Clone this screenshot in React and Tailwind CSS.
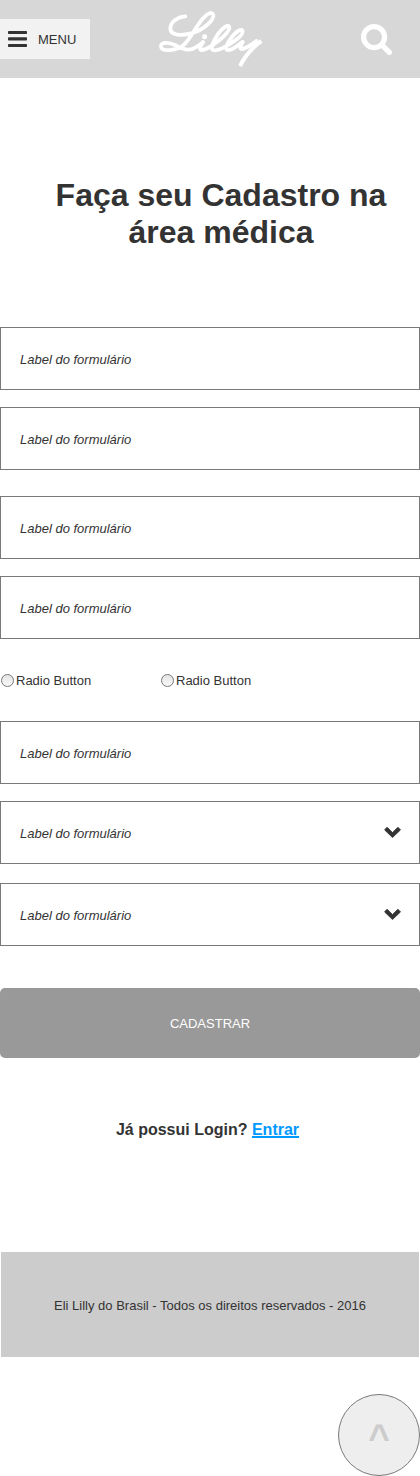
import React from "react";

function LillyLogo() {
  return (
    <svg
      className="h-[78px] w-[140px]"
      viewBox="0 0 420 234"
      fill="none"
      stroke="#fff"
      strokeLinecap="round"
      strokeLinejoin="round"
      role="img"
      aria-label="Lilly"
    >
      <path strokeWidth="11.5" d="M136 49C112 51 91 66 91 86C92 108 126 107 154 100C190 91 222 61 220 45C217 34 203 39 190 54C170 76 151 116 132 134C111 153 65 156 63 140C62 124 88 127 107 136C133 150 151 154 169 141C180 134 185 130 189 126" />
      <path strokeWidth="11.5" d="M189 127C181 138 175 151 187 150C210 147 269 100 268 83C266 70 247 84 235 101C222 120 210 145 219 150C236 157 309 112 308 95C306 83 290 93 278 108C263 127 252 147 263 150C278 152 293 137 306 127" />
      <path strokeWidth="12" d="M308 126C300 139 299 149 308 147C323 143 338 132 349 123" />
      <path strokeWidth="12" strokeLinecap="butt" d="M364 123C333 145 314 170 300 198" />
      <circle cx="194" cy="110" r="7.5" fill="#fff" stroke="none" />
    </svg>
  );
}

function BarsIcon() {
  return (
    <svg className="mr-[11px] h-4 w-[19px]" viewBox="0 0 19 16" fill="#333">
      <rect y="0" width="19" height="3" rx="0.8" />
      <rect y="6.3" width="19" height="3.2" rx="0.8" />
      <rect y="13" width="19" height="3" rx="0.8" />
    </svg>
  );
}

function SearchIcon() {
  return (
    <svg className="ml-[81px] size-[31px]" viewBox="0 0 31 31" fill="none" stroke="#fff">
      <circle cx="13.1" cy="13.1" r="10.5" strokeWidth="5.2" />
      <path d="M20.8 20.8L28.3 28.3" strokeWidth="5.4" strokeLinecap="round" />
    </svg>
  );
}

function Field({ select = false, className = "" }) {
  return (
    <div
      className={`flex h-[63px] w-full items-center justify-between border border-[#797979] bg-white pr-[17px] pl-[19px] ${className}`}
    >
      <span className="pt-[2px] text-[13px] leading-[15px] text-[#333] italic">Label do formulário</span>
      {select && (
        <svg className="mb-px h-3 w-[18px]" viewBox="0 0 18 12" fill="#333">
          <path
            d="M8.5 11.6L0.6 3.9L2.7 1.5L3.4 1.5L8.5 6.5L13.6 1.5L14.3 1.5L16.5 3.9Z"
            stroke="#333"
            strokeWidth="0.8"
            strokeLinejoin="round"
          />
        </svg>
      )}
    </div>
  );
}

function Radio() {
  return (
    <label className="flex w-40 items-center gap-[2px] pl-px text-[13px] leading-[15px] text-[#333]">
      <span className="size-[13px] rounded-full border border-[#777] bg-linear-to-b from-[#e4e4e4] to-[#f8f8f8]" />
      Radio Button
    </label>
  );
}

export default function App() {
  return (
    <div className="flex h-[1476px] w-[420px] flex-col bg-white font-['Liberation_Sans',Arial,sans-serif] text-[#333]">
      <header className="flex h-[78px] shrink-0 items-center bg-[#d7d7d7]">
        <button className="flex h-10 w-[90px] items-center bg-[#f2f2f2] pl-2 text-[13px]">
          <BarsIcon />
          <span className="pt-[2px] leading-4">MENU</span>
        </button>
        <div className="ml-[50px]">
          <LillyLogo />
        </div>
        <SearchIcon />
      </header>

      <h1 className="mt-[99px] ml-[22px] text-center text-[32px] leading-[37px] font-bold">
        Faça seu Cadastro na
        <br />
        área médica
      </h1>

      <form className="mt-[76px] flex flex-col">
        <Field />
        <Field className="mt-[17px]" />
        <Field className="mt-[26px]" />
        <Field className="mt-[17px]" />
        <div className="mt-[34px] mb-[33px] flex">
          <Radio />
          <Radio />
        </div>
        <Field />
        <Field select className="mt-[17px]" />
        <Field select className="mt-[19px]" />
        <button type="button" className="mt-[42px] h-[70px] rounded-[5px] bg-[#999] pt-[2px] text-[13px] text-white">
          CADASTRAR
        </button>
      </form>

      <p className="mt-[63px] pr-[5px] text-center text-base leading-[18px] font-bold">
        Já possui Login?{" "}
        <a className="text-[#0099ff] underline decoration-2 underline-offset-1 [text-decoration-skip-ink:none]">Entrar</a>
      </p>

      <footer className="mx-px mt-[113px] flex h-[105px] items-center justify-center bg-[#ccc] pt-[2px] text-[13px]">
        Eli Lilly do Brasil - Todos os direitos reservados - 2016
      </footer>

      <button className="mt-[37px] flex size-[82px] items-center justify-center self-end rounded-full border border-[#797979] bg-[#eee] text-[37px] font-bold text-[#ccc]">
        <span className="mt-1.5 leading-10">^</span>
      </button>
    </div>
  );
}
